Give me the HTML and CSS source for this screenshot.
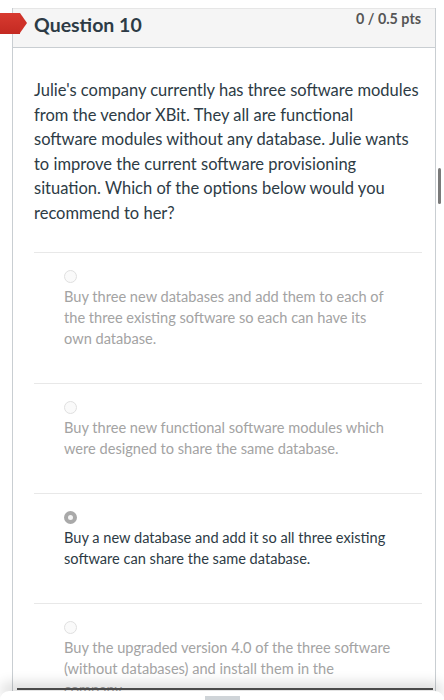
FILE: index.html
```html
<!DOCTYPE html>
<html>
<head>
<meta charset="utf-8">
<link rel="stylesheet" href="styles.css">
</head>
<body>
<div class="page">
  <div class="card">
    <div class="header">
      <span class="flag"></span>
      <h2 class="title">Question 10</h2>
      <span class="pts">0 / 0.5 pts</span>
    </div>
    <div class="body">
      <p class="question">Julie's company currently has three software modules from the vendor XBit. They all are functional software modules without any database. Julie wants to improve the current software provisioning situation. Which of the options below would you recommend to her?</p>
      <div class="answers">
        <div class="answer">
          <span class="radio"></span>
          <div class="atext">Buy three new databases and add them to each of the three existing software so each can have its own database.</div>
        </div>
        <div class="answer">
          <span class="radio"></span>
          <div class="atext">Buy three new functional software modules which were designed to share the same database.</div>
        </div>
        <div class="answer selected">
          <span class="radio"></span>
          <div class="atext">Buy a new database and add it so all three existing software can share the same database.</div>
        </div>
        <div class="answer">
          <span class="radio"></span>
          <div class="atext">Buy the upgraded version 4.0 of the three software (without databases) and install them in the company.</div>
        </div>
      </div>
    </div>
  </div>
  <span class="scrollbar"></span>
  <div class="sheet"><span class="handle"></span></div>
</div>
</body>
</html>
```

FILE: styles.css
```css
html, body {
  margin: 0;
  padding: 0;
  background: #fff;
}
body {
  font-family: Lato, "Open Sans", sans-serif;
  color: #2d3b45;
  width: 444px;
  height: 700px;
  overflow: hidden;
  position: relative;
}
.page {
  padding-top: 8px;
}
.card {
  margin: 0 8px 0 12px;
  border-left: 1px solid #c9ced2;
  border-right: 1px solid #c9ced2;
}
.header {
  position: relative;
  display: flex;
  justify-content: space-between;
  align-items: flex-start;
  height: 38px;
  background: #f5f5f5;
  border-top: 1px solid #e6e6e6;
  border-bottom: 1px solid #c9ced2;
  padding: 0 14px 0 21px;
}
.flag {
  position: absolute;
  left: -13px;
  top: 4px;
  width: 20px;
  height: 21px;
  background: linear-gradient(#d83a30, #c42a22);
}
.flag::after {
  content: "";
  position: absolute;
  left: 20px;
  top: 0;
  border-top: 10.5px solid transparent;
  border-bottom: 10.5px solid transparent;
  border-left: 7px solid #cf3229;
}
.title {
  margin: 0;
  font-size: 19.5px;
  font-weight: 700;
  line-height: 24px;
  padding-top: 4px;
  color: #2d3b45;
}
.pts {
  font-size: 14.3px;
  font-weight: 700;
  color: #555;
  line-height: 17px;
  padding-top: 1px;
}
.body {
  padding: 30px 13px 0 21px;
}
.question {
  margin: 0 2px 0 0;
  font-size: 16.5px;
  line-height: 24.5px;
  color: #2d3b45;
}
.answers {
  margin-top: 27px;
}
.answer {
  border-top: 1px solid #e8e8e8;
  padding: 17px 28px 34px 30px;
  color: #a3a3a3;
}
.radio {
  display: block;
  width: 11px;
  height: 11px;
  border: 1px solid #e0e0e0;
  border-radius: 50%;
  background: #fafafa;
  margin-bottom: 3px;
}
.selected .radio {
  width: 5px;
  height: 5px;
  border: 4px solid #a9a9a9;
  background: #f4f4f4;
}
.atext {
  font-size: 14.6px;
  line-height: 21px;
}
.selected .atext {
  color: #2d3b45;
}
.scrollbar {
  position: absolute;
  left: 438px;
  top: 168px;
  width: 3px;
  height: 36px;
  border-radius: 2px;
  background: #7a7a7a;
}
.sheet {
  position: absolute;
  left: 0;
  right: 0;
  bottom: 0;
  height: 9px;
  background: #fff;
  border-radius: 10px 10px 0 0;
  box-shadow: 0 -6px 14px rgba(0, 0, 0, 0.22);
}
.sheet::before {
  content: "";
  position: absolute;
  left: 17px;
  right: 11px;
  top: -3px;
  height: 2px;
  background: #4a4a4a;
}
.handle {
  position: absolute;
  left: 205px;
  top: 5px;
  width: 35px;
  height: 4px;
  background: #cfd4d8;
}
```
